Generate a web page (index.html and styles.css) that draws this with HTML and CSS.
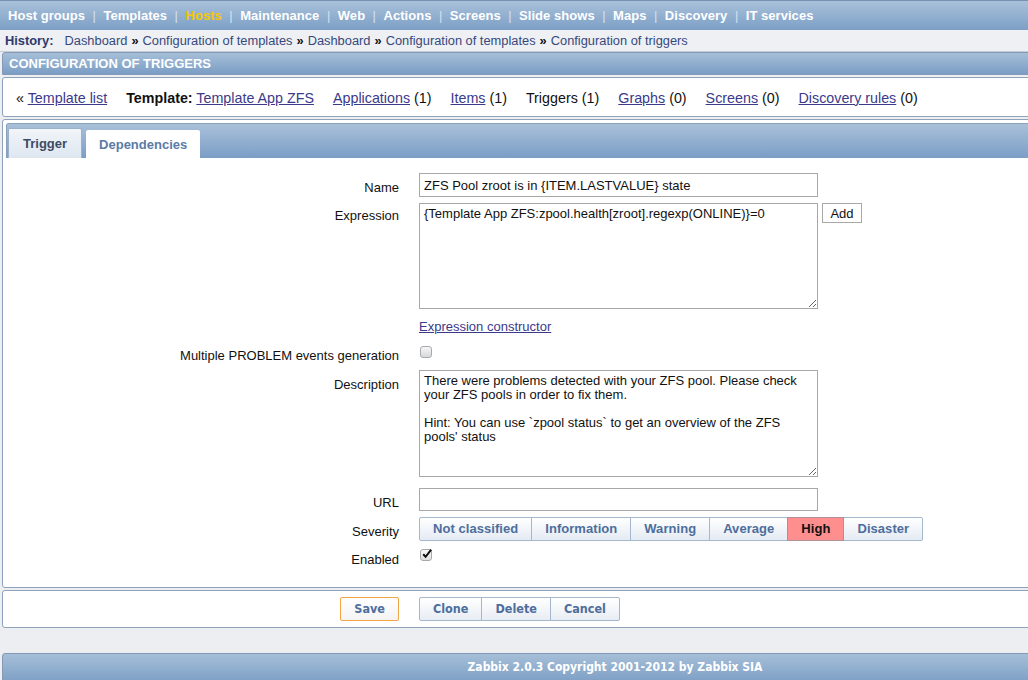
FILE: index.html
```html
<!DOCTYPE html>
<html>
<head>
<meta charset="utf-8">
<title>Configuration of triggers</title>
<link rel="stylesheet" href="styles.css">
</head>
<body>
<div class="page">
  <div class="topnav">
    <a class="mi">Host groups</a><span class="sep">|</span>
    <a class="mi">Templates</a><span class="sep">|</span>
    <a class="mi sel">Hosts</a><span class="sep">|</span>
    <a class="mi">Maintenance</a><span class="sep">|</span>
    <a class="mi">Web</a><span class="sep">|</span>
    <a class="mi">Actions</a><span class="sep">|</span>
    <a class="mi">Screens</a><span class="sep">|</span>
    <a class="mi">Slide shows</a><span class="sep">|</span>
    <a class="mi">Maps</a><span class="sep">|</span>
    <a class="mi">Discovery</a><span class="sep">|</span>
    <a class="mi">IT services</a>
  </div>
  <div class="history">
    <b class="hlabel">History:</b>
    <a class="hlink">Dashboard</a><span class="raq">»</span>
    <a class="hlink">Configuration of templates</a><span class="raq">»</span>
    <a class="hlink">Dashboard</a><span class="raq">»</span>
    <a class="hlink">Configuration of templates</a><span class="raq">»</span>
    <a class="hlink">Configuration of triggers</a>
  </div>
  <div class="hdr">CONFIGURATION OF TRIGGERS</div>
  <div class="navbox">
    <span class="ni">« <a class="lnk">Template list</a></span>
    <span class="ni"><b>Template:</b> <a class="lnk">Template App ZFS</a></span>
    <span class="ni"><a class="lnk">Applications</a> (1)</span>
    <span class="ni"><a class="lnk">Items</a> (1)</span>
    <span class="ni">Triggers (1)</span>
    <span class="ni"><a class="lnk">Graphs</a> (0)</span>
    <span class="ni"><a class="lnk">Screens</a> (0)</span>
    <span class="ni"><a class="lnk">Discovery rules</a> (0)</span>
  </div>
  <div class="tabw">
    <div class="tabhead">
      <span class="tab active">Trigger</span>
      <span class="tab">Dependencies</span>
    </div>
    <div class="form">
      <div class="row r-name">
        <div class="lbl">Name</div>
        <div class="fld"><input class="txt" type="text" value="ZFS Pool zroot is in {ITEM.LASTVALUE} state"></div>
      </div>
      <div class="row r-expr">
        <div class="lbl">Expression</div>
        <div class="fld fld-expr">
          <textarea class="ta ta-expr">{Template App ZFS:zpool.health[zroot].regexp(ONLINE)}=0</textarea>
          <button class="addbtn">Add</button>
        </div>
      </div>
      <div class="row r-link">
        <div class="lbl"></div>
        <div class="fld"><a class="lnk">Expression constructor</a></div>
      </div>
      <div class="row r-multi">
        <div class="lbl">Multiple PROBLEM events generation</div>
        <div class="fld"><span class="cb"></span></div>
      </div>
      <div class="row r-desc">
        <div class="lbl">Description</div>
        <div class="fld"><textarea class="ta ta-desc">There were problems detected with your ZFS pool. Please check your ZFS pools in order to fix them.

Hint: You can use `zpool status` to get an overview of the ZFS pools' status</textarea></div>
      </div>
      <div class="row r-url">
        <div class="lbl">URL</div>
        <div class="fld"><input class="txt txt-url" type="text" value=""></div>
      </div>
      <div class="row r-sev">
        <div class="lbl">Severity</div>
        <div class="fld">
          <div class="sevgroup">
            <span class="sev">Not classified</span><span class="sev">Information</span><span class="sev">Warning</span><span class="sev">Average</span><span class="sev sev-high">High</span><span class="sev">Disaster</span>
          </div>
        </div>
      </div>
      <div class="row r-en">
        <div class="lbl">Enabled</div>
        <div class="fld"><span class="cb checked"><svg class="tick" width="12" height="12" viewBox="0 0 12 12"><path d="M2.2 6.2 L4.6 8.8 L10.2 1.6" fill="none" stroke="#111" stroke-width="2"/></svg></span></div>
      </div>
    </div>
  </div>
  <div class="actions">
    <div class="act-left"><span class="btn btn-save">Save</span></div>
    <div class="btngroup"><span class="btn">Clone</span><span class="btn">Delete</span><span class="btn">Cancel</span></div>
  </div>
  <div class="footer">Zabbix 2.0.3 Copyright 2001-2012 by Zabbix SIA</div>
</div>
</body>
</html>
```
FILE: styles.css
```css
html, body {
  margin: 0;
  padding: 0;
  overflow: hidden;
}
body {
  background: #eceef1;
  font-family: "Liberation Sans", Arial, sans-serif;
  font-size: 13px;
  color: #111;
}
.page {
  width: 1228px;
}
.topnav {
  height: 29px;
  border-top: 1px solid #7890ad;
  background: linear-gradient(#a9c1da, #7c9fc6);
  display: flex;
  align-items: center;
  padding-left: 8px;
  font-weight: bold;
  font-size: 13px;
  color: #fff;
}
.mi { color: #fff; letter-spacing: 0.04px; }
.mi.sel { color: #f7c800; }
.sep {
  font-weight: normal;
  color: #d4e0ec;
  margin: 0 7.5px;
}
.history {
  height: 21px;
  background: #eef0f4;
  border-bottom: 1px solid #c4ccd6;
  display: flex;
  align-items: center;
  padding-left: 5px;
  font-size: 12.85px;
}
.hlabel {
  color: #2d3a6c;
  margin-right: 11px;
}
.hlink { color: #35497c; }
.raq {
  font-weight: bold;
  color: #111;
  margin: 0 4px;
}
.hdr {
  margin-left: 2px;
  height: 21px;
  line-height: 21px;
  border: 1px solid #8399b5;
  border-radius: 3px 3px 0 0;
  background: linear-gradient(#a6bfd8, #7a9dc4);
  color: #fff;
  font-weight: bold;
  padding-left: 6px;
}
.navbox {
  margin: 2px 0 0 2px;
  height: 37px;
  border: 1px solid #8ea2bb;
  border-radius: 3px;
  background: #fff;
  display: flex;
  align-items: center;
  gap: 19px;
  padding-left: 13px;
  padding-top: 1px;
  font-size: 14.3px;
}
.lnk {
  color: #3b3a8a;
  text-decoration: underline;
}
.tabw {
  margin: 2px 0 0 2px;
  border: 1px solid #8ea2bb;
  border-radius: 3px;
  background: #fff;
  padding: 3px 3px 0 3px;
}
.tabhead {
  height: 34px;
  border: 1px solid #8aa1bd;
  border-bottom: none;
  border-radius: 3px 3px 0 0;
  background: linear-gradient(#a9c0d9, #7b9ec6);
  display: flex;
  align-items: flex-end;
  gap: 4px;
  padding-left: 1px;
}
.tab {
  height: 28px;
  line-height: 29px;
  padding: 0 13px;
  background: #fff;
  color: #5b7ba6;
  font-weight: bold;
  border-radius: 2px 2px 0 0;
}
.tab.active {
  height: 29px;
  line-height: 30px;
  padding: 0 14px;
  background: linear-gradient(#f2f5f9, #dde6f0);
  border: 1px solid #9cb1ca;
  border-bottom: none;
  color: #3c4a66;
}
.form {
  padding: 15px 0 19px 0;
}
.row {
  display: grid;
  grid-template-columns: 393px 1fr;
  column-gap: 20px;
}
.lbl {
  text-align: right;
  line-height: 16px;
  padding-top: 7px;
  color: #111;
}
.fld {
  display: flex;
  align-items: flex-start;
}
.txt {
  box-sizing: border-box;
  width: 399px;
  height: 24px;
  border: 1px solid #a8a8a4;
  padding: 0 4px;
  margin: 0;
  font-family: "Liberation Sans", Arial, sans-serif;
  font-size: 13px;
  color: #111;
  background: #fff;
  outline: none;
}
.txt-url { height: 23px; }
.r-expr { margin-top: 6px; }
.r-expr .lbl { padding-top: 5px; }
.ta {
  box-sizing: border-box;
  width: 399px;
  border: 1px solid #a8a8a4;
  padding: 3px 4px;
  margin: 0;
  font-family: "Liberation Sans", Arial, sans-serif;
  font-size: 13px;
  line-height: 14px;
  color: #111;
  background: #fff;
  outline: none;
}
.ta-expr { height: 106px; }
.ta-desc { height: 107px; }
.addbtn {
  margin: 0 0 0 4px;
  height: 20px;
  width: 40px;
  padding: 0;
  border: 1px solid #a8a8a4;
  background: #fff;
  font-family: "Liberation Sans", Arial, sans-serif;
  font-size: 13px;
  color: #111;
}
.r-link { margin-top: 10px; }
.r-link .lbl { padding-top: 0; }
.r-link .fld { line-height: 16px; }
.r-multi { margin-top: 11px; }
.r-multi .lbl { padding-top: 2px; }
.cb {
  box-sizing: border-box;
  display: block;
  width: 12px;
  height: 12px;
  margin-left: 1px;
  border: 1px solid #a7a9ad;
  border-radius: 3px;
  background: linear-gradient(#f6f6f6, #d8d9dc);
  position: relative;
}
.cb.checked {
  background: linear-gradient(#fafafa, #e0e0e2);
}
.tick {
  position: absolute;
  left: 0;
  top: -2px;
}
.r-desc { margin-top: 6px; }
.r-url { margin-top: 11px; }
.r-sev { margin-top: 6px; }
.sevgroup {
  display: flex;
}
.sev {
  height: 22px;
  line-height: 22px;
  padding: 0 13px;
  border: 1px solid #a5b7cc;
  margin-left: -1px;
  background: linear-gradient(#ffffff, #e4ebf3);
  color: #4d6e9d;
  font-weight: bold;
  letter-spacing: 0.05px;
}
.sev:first-child {
  margin-left: 0;
  border-radius: 2px 0 0 2px;
}
.sev:last-child { border-radius: 0 2px 2px 0; }
.sev-high {
  background: #ff8f8f;
  color: #111;
  border-color: #b28f98;
  position: relative;
}
.r-en { margin-top: 8px; }
.r-en .lbl { padding-top: 3px; }
.actions {
  margin: 2px 0 0 2px;
  height: 36px;
  border: 1px solid #8ea2bb;
  border-radius: 3px;
  background: #fff;
  display: grid;
  grid-template-columns: 396px 1fr;
  column-gap: 20px;
  align-items: start;
}
.act-left {
  display: flex;
  justify-content: flex-end;
  padding-top: 6px;
}
.btngroup {
  display: flex;
  padding-top: 6px;
}
.btn {
  height: 22px;
  line-height: 22px;
  padding: 0 13px;
  border: 1px solid #a5b7cc;
  margin-left: -1px;
  background: linear-gradient(#ffffff, #e8edf4);
  color: #4d6e9d;
  font-family: "DejaVu Sans Condensed", "DejaVu Sans", sans-serif;
  font-weight: bold;
  font-size: 12.5px;
}
.btngroup .btn:first-child {
  margin-left: 0;
  border-radius: 2px 0 0 2px;
}
.btngroup .btn:last-child { border-radius: 0 2px 2px 0; }
.btn-save {
  margin-left: 0;
  border-color: #f2a544;
  border-radius: 2px;
  background: linear-gradient(#ffffff, #f4f4f4);
}
.footer {
  margin: 25px 0 0 2px;
  height: 30px;
  line-height: 27px;
  border: 1px solid #8399b5;
  border-radius: 3px 3px 0 0;
  background: linear-gradient(#a6bfd8, #7a9dc4);
  color: #fff;
  text-align: center;
  font-family: "DejaVu Sans Condensed", "DejaVu Sans", sans-serif;
  font-weight: bold;
  font-size: 12px;
}
```
